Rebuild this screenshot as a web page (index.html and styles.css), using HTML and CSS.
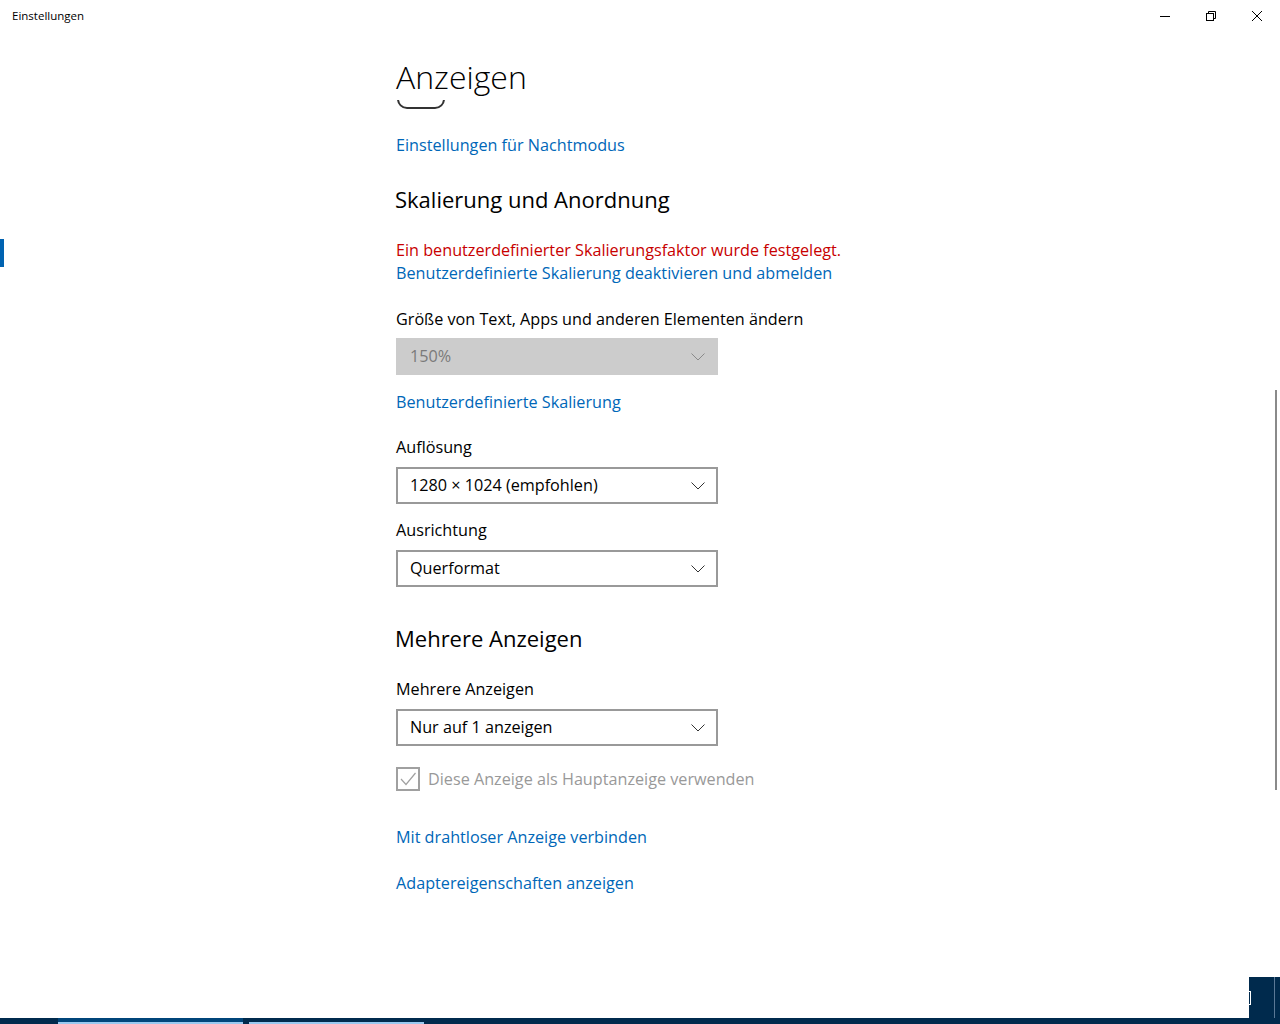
FILE: index.html
```html
<!DOCTYPE html>
<html lang="de">
<head>
  <meta charset="UTF-8" />
  <title>Einstellungen</title>
  <link rel="stylesheet" href="styles.css">
</head>
<body>
  <div class="titlebar">
    <div class="app-title">Einstellungen</div>
    <div class="caption-buttons">
      <div class="caption-btn">
        <svg width="10" height="10" viewBox="0 0 10 10"><path d="M0 5.5h10" stroke="#000" stroke-width="1"/></svg>
      </div>
      <div class="caption-btn">
        <svg width="10" height="10" viewBox="0 0 10 10" fill="none" stroke="#000" stroke-width="1">
          <rect x="0.5" y="2.5" width="7" height="7"/>
          <path d="M2.5 2.5v-2h7v7h-2"/>
        </svg>
      </div>
      <div class="caption-btn">
        <svg width="10" height="10" viewBox="0 0 10 10"><path d="M0 0L10 10M10 0L0 10" stroke="#000" stroke-width="1"/></svg>
      </div>
    </div>
  </div>

  <div class="window">
    <nav class="nav">
      <div class="nav-indicator"></div>
    </nav>

    <main class="page">
      <header class="page-header">
        <h1>Anzeigen</h1>
      </header>

      <div class="page-body">
        <div class="toggle-clip">
          <div class="toggle"></div>
        </div>

        <a class="link night-link">Einstellungen für Nachtmodus</a>

        <h2 class="section-title scale-title">Skalierung und Anordnung</h2>

        <div class="warning">Ein benutzerdefinierter Skalierungsfaktor wurde festgelegt.</div>
        <a class="link">Benutzerdefinierte Skalierung deaktivieren und abmelden</a>

        <div class="label scale-label">Größe von Text, Apps und anderen Elementen ändern</div>
        <div class="combo disabled">
          <span>150%</span>
          <svg class="chevron" width="14" height="8" viewBox="0 0 14 8"><path d="M0.5 0.5L7 7L13.5 0.5" fill="none" stroke="currentColor" stroke-width="1"/></svg>
        </div>

        <a class="link custom-link">Benutzerdefinierte Skalierung</a>

        <div class="label res-label">Auflösung</div>
        <div class="combo">
          <span>1280 × 1024 (empfohlen)</span>
          <svg class="chevron" width="14" height="8" viewBox="0 0 14 8"><path d="M0.5 0.5L7 7L13.5 0.5" fill="none" stroke="currentColor" stroke-width="1"/></svg>
        </div>

        <div class="label orient-label">Ausrichtung</div>
        <div class="combo">
          <span>Querformat</span>
          <svg class="chevron" width="14" height="8" viewBox="0 0 14 8"><path d="M0.5 0.5L7 7L13.5 0.5" fill="none" stroke="currentColor" stroke-width="1"/></svg>
        </div>

        <h2 class="section-title multi-title">Mehrere Anzeigen</h2>

        <div class="label multi-label">Mehrere Anzeigen</div>
        <div class="combo">
          <span>Nur auf 1 anzeigen</span>
          <svg class="chevron" width="14" height="8" viewBox="0 0 14 8"><path d="M0.5 0.5L7 7L13.5 0.5" fill="none" stroke="currentColor" stroke-width="1"/></svg>
        </div>

        <div class="checkbox-row">
          <div class="checkbox">
            <svg width="20" height="20" viewBox="0 0 20 20"><path d="M3 10L8 15.5L17.5 4" fill="none" stroke="#a0a0a0" stroke-width="1.2"/></svg>
          </div>
          <span>Diese Anzeige als Hauptanzeige verwenden</span>
        </div>

        <a class="link wireless-link">Mit drahtloser Anzeige verbinden</a>
        <a class="link adapter-link">Adaptereigenschaften anzeigen</a>
      </div>
    </main>

    <div class="scrollbar"></div>
  </div>

  <div class="corner">
    <div class="corner-bracket"></div>
    <div class="corner-line"></div>
  </div>

  <div class="taskbar">
    <div class="task-item active"></div>
    <div class="task-item"></div>
  </div>
</body>
</html>
```

FILE: styles.css
```css
* {
  box-sizing: border-box;
}

body {
  margin: 0;
  width: 1280px;
  height: 1024px;
  overflow: hidden;
  position: relative;
  background: #fff;
  color: #000;
  font-family: 'Open Sans', 'Noto Sans', sans-serif;
}

/* title bar */
.titlebar {
  height: 32px;
  display: flex;
  justify-content: space-between;
}

.app-title {
  font-size: 11.5px;
  line-height: 32px;
  padding-left: 12px;
}

.caption-buttons {
  display: flex;
}

.caption-btn {
  width: 46px;
  height: 32px;
  display: flex;
  align-items: center;
  justify-content: center;
}

/* main window */
.window {
  display: flex;
  height: 986px;
  position: relative;
}

.nav {
  width: 396px;
  flex-shrink: 0;
}

.nav-indicator {
  width: 4px;
  height: 28px;
  margin-top: 207px;
  background: #0063b1;
}

.page {
  flex: 1;
  display: flex;
  flex-direction: column;
}

.page-header {
  height: 68px;
}

h1 {
  margin: 0;
  padding-top: 25px;
  font-size: 32px;
  font-weight: 300;
  line-height: 40px;
}

.page-body {
  display: flex;
  flex-direction: column;
  align-items: flex-start;
  font-size: 16.2px;
  line-height: 23px;
}

.toggle-clip {
  height: 9px;
  width: 50px;
  overflow: hidden;
}

.toggle {
  width: 48px;
  height: 20px;
  margin-top: -11px;
  margin-left: 1px;
  border: 2px solid #333;
  border-radius: 10px;
}

.link {
  color: #0067b8;
  cursor: pointer;
}

.night-link {
  margin-top: 25px;
}

.section-title {
  margin: 0 0 0 -1px;
  font-size: 22px;
  font-weight: 400;
  line-height: 32px;
}

.scale-title {
  margin-top: 26px;
}

.multi-title {
  margin-top: 35px;
}

.warning {
  margin-top: 24px;
  color: #c80000;
}

.label {
  margin-top: 23px;
}

.res-label {
  margin-top: 22px;
}

.orient-label {
  margin-top: 15px;
}

.multi-label {
  margin-top: 24px;
}

.combo {
  margin-top: 8px;
  width: 322px;
  height: 37px;
  border: 2px solid #999;
  padding: 0 11px 0 12px;
  display: flex;
  align-items: center;
  justify-content: space-between;
  color: #000;
}

.combo .chevron {
  color: #333;
}

.combo.disabled {
  margin-top: 7px;
  background: #ccc;
  border-color: #ccc;
  color: #7a7a7a;
}

.combo.disabled .chevron {
  color: #8a8a8a;
}

.custom-link {
  margin-top: 16px;
}

.checkbox-row {
  margin-top: 21px;
  display: flex;
  align-items: center;
  gap: 8px;
  color: #999;
}

.checkbox {
  width: 24px;
  height: 24px;
  border: 2px solid #a0a0a0;
  display: flex;
  align-items: center;
  justify-content: center;
}

.wireless-link {
  margin-top: 35px;
}

.adapter-link {
  margin-top: 23px;
}

.scrollbar {
  position: absolute;
  right: 3px;
  top: 358px;
  width: 2px;
  height: 400px;
  background: #8a8a8a;
}

/* bottom-right tray corner and taskbar strip */
.corner {
  position: absolute;
  right: 0;
  bottom: 6px;
  width: 31px;
  height: 41px;
  background: #002a4d;
}

.corner-bracket {
  position: absolute;
  left: -4px;
  top: 14px;
  width: 6px;
  height: 14px;
  border: 1px solid #fff;
  border-left: none;
}

.corner-line {
  position: absolute;
  left: 25px;
  top: 0;
  width: 1px;
  height: 41px;
  background: #5a7896;
}

.taskbar {
  position: absolute;
  left: 0;
  bottom: 0;
  width: 1280px;
  height: 6px;
  background: #002a4d;
  display: flex;
  gap: 6px;
  padding-left: 58px;
}

.task-item {
  width: 175px;
  border-bottom: 2px solid #99c9f0;
}

.task-item.active {
  width: 185px;
  background: #00457a;
}
```
